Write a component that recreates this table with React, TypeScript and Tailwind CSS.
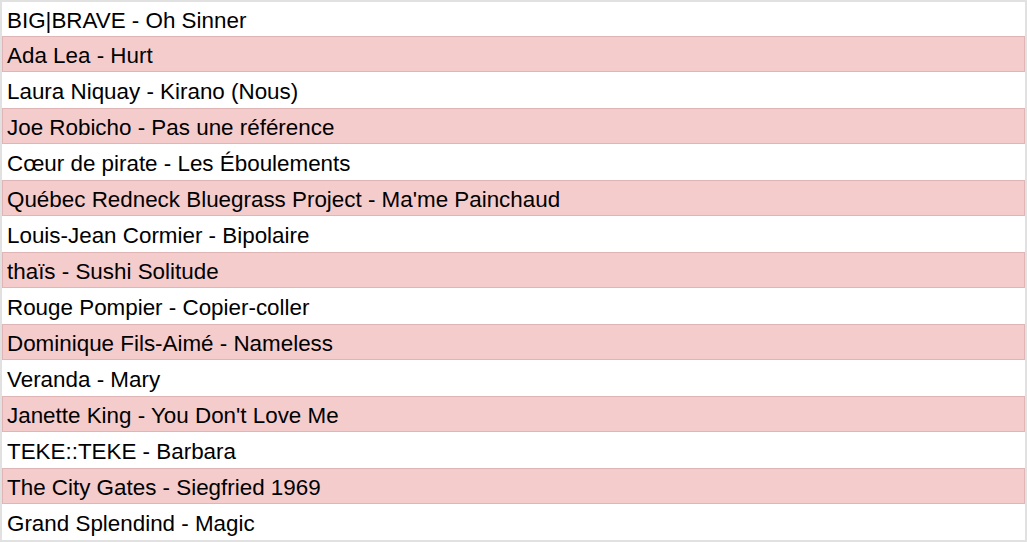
import React from "react";

const rows = [
  "BIG|BRAVE - Oh Sinner",
  "Ada Lea - Hurt",
  "Laura Niquay - Kirano (Nous)",
  "Joe Robicho - Pas une référence",
  "Cœur de pirate - Les Éboulements",
  "Québec Redneck Bluegrass Project - Ma'me Painchaud",
  "Louis-Jean Cormier - Bipolaire",
  "thaïs - Sushi Solitude",
  "Rouge Pompier - Copier-coller",
  "Dominique Fils-Aimé - Nameless",
  "Veranda - Mary",
  "Janette King - You Don't Love Me",
  "TEKE::TEKE - Barbara",
  "The City Gates - Siegfried 1969",
  "Grand Splendind - Magic",
];

export default function App() {
  return (
    <div
      className="w-[1027px] h-[542px] border-2 border-[#e1e1e1] bg-white flex flex-col overflow-hidden text-black"
      style={{ fontFamily: '"Liberation Sans", Arial, sans-serif' }}
    >
      {rows.map((r, i) => {
        const pink = i % 2 === 1;
        const first = i === 0;
        return (
          <div
            key={i}
            className={
              pink
                ? "h-[36px] shrink-0 flex items-center bg-[#f4cccc] border border-[#dfb5b5] pl-[4px] pt-[2px] text-[22.4px] leading-[25px] whitespace-nowrap"
                : first
                ? "h-[34px] shrink-0 flex items-center bg-white pl-[5px] pt-[2px] text-[22.4px] leading-[25px] whitespace-nowrap"
                : "h-[36px] shrink-0 flex items-center bg-white pl-[5px] pt-[2px] text-[22.4px] leading-[25px] whitespace-nowrap"
            }
          >
            {r}
          </div>
        );
      })}
    </div>
  );
}
